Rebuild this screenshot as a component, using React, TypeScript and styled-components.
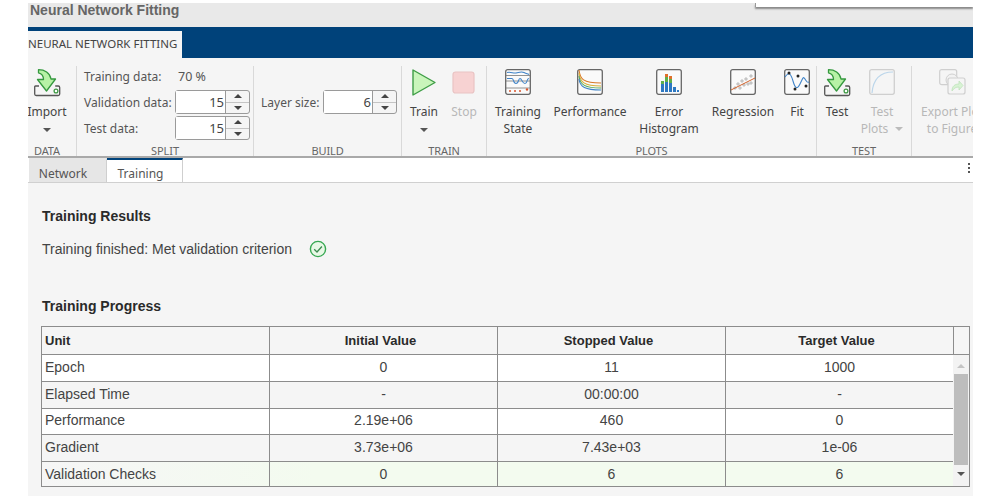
import React from "react";
import styled, { createGlobalStyle } from "styled-components";

const Global = createGlobalStyle`
  html, body { margin: 0; padding: 0; background: #fff; }
  body { font-family: "Liberation Sans", Arial, sans-serif; }
`;

const RIBBON_FONT = `"Noto Sans", "Open Sans", sans-serif`;

const Page = styled.div`
  position: relative;
  width: 945px;
  height: 493px;
  margin: 3px 0 0 28px;
  overflow: hidden;
  display: flex;
  flex-direction: column;
  background: #f5f5f5;
`;
const TitleBar = styled.div`
  height: 24px;
  flex: none;
  background: #e9e9e9;
  color: #666;
  font-size: 14px;
  font-weight: bold;
  line-height: 15px;
  padding-left: 2px;
`;
const Popover = styled.div`
  position: absolute;
  top: 0;
  left: 727px;
  right: 0;
  height: 4px;
  background: #fff;
  border-left: 1px solid #999;
  box-shadow: 0 2px 2px #888;
`;
const BlueBar = styled.div`
  height: 31px;
  flex: none;
  background: #00427a;
  display: flex;
  align-items: flex-end;
`;
const RibbonTab = styled.div`
  width: 154px;
  height: 27px;
  background: #f5f5f5;
  color: #444;
  font: 11.5px/26px ${RIBBON_FONT};
  white-space: nowrap;
`;
const Ribbon = styled.div`
  flex: none;
  display: flex;
  background: #f5f5f5;
  border-bottom: 2px solid #a9a9a9;
  box-sizing: border-box;
  height: 100px;
  font-family: ${RIBBON_FONT};
  color: #444;
  overflow: hidden;
`;
const Group = styled.div<{ $w: number; $ml?: number; $last?: boolean }>`
  width: ${(p) => p.$w}px;
  margin-left: ${(p) => p.$ml ?? 0}px;
  flex: none;
  box-sizing: border-box;
  display: flex;
  flex-direction: column;
  margin-top: 8px;
  border-right: ${(p) => (p.$last ? "none" : "1px solid #d9d9d9")};
`;
const GroupBody = styled.div<{ $pl?: number; $gap?: number; $center?: boolean }>`
  flex: 1;
  display: flex;
  gap: ${(p) => p.$gap ?? 0}px;
  padding-left: ${(p) => p.$pl ?? 0}px;
  justify-content: ${(p) => (p.$center ? "center" : "flex-start")};
  min-height: 0;
`;
const GroupLabel = styled.div`
  height: 10px;
  flex: none;
  text-align: center;
  font-size: 11px;
  line-height: 10px;
  color: #666;
  letter-spacing: -0.1px;
  white-space: nowrap;
`;
const Tool = styled.div<{ $w: number; $off?: boolean }>`
  width: ${(p) => p.$w}px;
  flex: none;
  display: flex;
  flex-direction: column;
  align-items: center;
  padding-top: 3px;
  font-size: 12px;
  line-height: 17px;
  text-align: center;
  color: ${(p) => (p.$off ? "#b8b8b8" : "#444")};
  white-space: nowrap;
`;
const ToolLabel = styled.div``;
const IconWrap = styled.div`
  height: 28px;
  flex: none;
  margin-bottom: 6px;
  display: flex;
  justify-content: center;
`;
const Caret = styled.span<{ $inline?: boolean; $off?: boolean }>`
  display: ${(p) => (p.$inline ? "inline-block" : "block")};
  width: 0;
  height: 0;
  margin: ${(p) => (p.$inline ? "0 0 2px 7px" : "8px auto 0")};
  vertical-align: middle;
  border-left: 4px solid transparent;
  border-right: 4px solid transparent;
  border-top: 4px solid ${(p) => (p.$off ? "#bbb" : "#555")};
`;
const SplitGrid = styled.div<{ $col: number }>`
  display: grid;
  grid-template-columns: ${(p) => p.$col}px auto;
  grid-auto-rows: 26px;
  align-items: center;
  font-size: 12px;
  color: #555;
  margin-top: -3px;
  white-space: nowrap;
`;
const Percent = styled.span`
  padding-left: 3px;
  font-size: 12.5px;
`;
const Spin = styled.div<{ $w: number }>`
  width: ${(p) => p.$w}px;
  height: 24px;
  box-sizing: border-box;
  display: flex;
  border: 1px solid #9a9a9a;
  border-radius: 3px;
  background: #f5f5f5;
`;
const SpinInput = styled.div`
  flex: 1;
  background: #fff;
  text-align: right;
  padding-right: 1px;
  font-size: 13px;
  line-height: 22px;
  color: #444;
`;
const SpinArrows = styled.div`
  width: 23px;
  flex: none;
  border-left: 1px solid #9a9a9a;
  display: flex;
  flex-direction: column;
`;
const SpinHalf = styled.div<{ $top?: boolean }>`
  flex: 1;
  display: flex;
  align-items: center;
  justify-content: center;
  border-bottom: ${(p) => (p.$top ? "1px solid #c4c4c4" : "none")};
`;
const Up = styled.span`
  width: 0;
  height: 0;
  border-left: 4.5px solid transparent;
  border-right: 4.5px solid transparent;
  border-bottom: 4px solid #444;
`;
const Down = styled.span`
  width: 0;
  height: 0;
  border-left: 4.5px solid transparent;
  border-right: 4.5px solid transparent;
  border-top: 4px solid #444;
`;
const Tabs = styled.div`
  height: 25px;
  flex: none;
  display: flex;
  align-items: stretch;
  background: #fff;
  border-bottom: 1px solid #d0d0d0;
  box-sizing: border-box;
  font-family: ${RIBBON_FONT};
  font-size: 12px;
  padding-left: 1px;
`;
const Tab = styled.div<{ $active?: boolean }>`
  width: ${(p) => (p.$active ? 76 : 78)}px;
  box-sizing: border-box;
  text-align: center;
  line-height: 27px;
  padding-right: ${(p) => (p.$active ? 8 : 9)}px;
  color: #555;
  background: ${(p) => (p.$active ? "#fff" : "#e6e6e6")};
  border-top: 2px solid ${(p) => (p.$active ? "#00427a" : "#e6e6e6")};
  border-right: 1px solid #cfcfcf;
`;
const TabSpacer = styled.div`
  flex: 1;
`;
const Kebab = styled.div`
  width: 8px;
  flex: none;
  display: flex;
  flex-direction: column;
  align-items: center;
  justify-content: center;
  gap: 2px;
  padding-bottom: 4px;
`;
const KebabDot = styled.span`
  width: 2px;
  height: 2px;
  background: #555;
`;
const Content = styled.div`
  flex: 1;
  padding: 25px 3px 0 13px;
  display: flex;
  flex-direction: column;
  min-height: 0;
`;
const Heading = styled.div`
  font-size: 14px;
  font-weight: bold;
  color: #2a2a2a;
  line-height: 16px;
  margin-left: 1px;
`;
const Status = styled.div`
  display: flex;
  align-items: center;
  gap: 17px;
  margin: 16px 0 0 1px;
  height: 18px;
  font-size: 14px;
  color: #444;
`;
const ProgressHeading = styled(Heading)`
  margin-top: 40px;
`;
const Table = styled.div`
  margin-top: 12px;
  width: 929px;
  box-sizing: border-box;
  border: 1px solid #8c8c8c;
  font-size: 14px;
  color: #444;
`;
const HeadRow = styled.div`
  display: grid;
  grid-template-columns: 228px 228px 228px 228px 1fr;
  height: 27px;
  border-bottom: 1px solid #8c8c8c;
  background: #f5f5f5;
`;
const HeadCell = styled.div<{ $left?: boolean }>`
  border-right: 1px solid #8c8c8c;
  font-size: 13px;
  font-weight: bold;
  color: #2a2a2a;
  line-height: 28px;
  text-align: ${(p) => (p.$left ? "left" : "center")};
  padding: ${(p) => (p.$left ? "0 0 0 3px" : "0 6px 0 0")};
`;
const HeadEnd = styled.div``;
const TableBody = styled.div`
  display: flex;
`;
const Rows = styled.div`
  width: 911px;
  flex: none;
`;
const Row = styled.div<{ $h: number; $tone: "white" | "grey" | "green"; $last?: boolean }>`
  display: grid;
  grid-template-columns: 228px 228px 228px 1fr;
  height: ${(p) => p.$h}px;
  box-sizing: border-box;
  line-height: ${(p) => (p.$last ? p.$h + 1 : p.$h - 3)}px;
  border-bottom: ${(p) => (p.$last ? "none" : "1px solid #8c8c8c")};
  background: ${(p) =>
    p.$tone === "white"
      ? "#fff"
      : p.$tone === "grey"
        ? "#f5f5f5"
        : "linear-gradient(90deg, #f6f6f6 0%, #f3fbef 30%, #f3fbef 100%)"};
`;
const Cell = styled.div<{ $left?: boolean; $last?: boolean }>`
  border-right: ${(p) => (p.$last ? "none" : "1px solid #8c8c8c")};
  text-align: ${(p) => (p.$left ? "left" : "center")};
  padding-left: ${(p) => (p.$left ? 3 : 0)}px;
  white-space: nowrap;
`;
const Scroll = styled.div`
  flex: 1;
  display: flex;
  flex-direction: column;
  align-items: center;
  background: #f3f3f3;
  padding-top: 9px;
  box-sizing: border-box;
`;
const ScrollThumb = styled.div`
  width: 14px;
  height: 91px;
  margin-top: 6px;
  background: #bdbdbd;
`;
const ScrollUp = styled.span`
  width: 0;
  height: 0;
  border-left: 4.5px solid transparent;
  border-right: 4.5px solid transparent;
  border-bottom: 4px solid #c4c4c4;
`;
const ScrollDown = styled.span`
  width: 0;
  height: 0;
  margin-top: 7px;
  border-left: 4.5px solid transparent;
  border-right: 4.5px solid transparent;
  border-top: 4px solid #555;
`;

const LoadIcon = () => (
  <svg width="27" height="28" viewBox="0 0 27 28">
    <path d="M5 17H1.500Q.7 17 .7 18v7q0 1.500 1.500 1.500h22q1.500 0 1.500-1.500v-6.500q0-1.500-1.500-1.500h-3" fill="#f5f5f5" stroke="#555" strokeWidth="1.300" />
    <circle cx="22" cy="22" r="1.900" fill="#fff" stroke="#3f9a45" strokeWidth="1.300" />
    <path d="M4.500 .7c6 0 11.500 3 12.500 9.300h4.500L12.500 22 3.500 10.500h6C9.500 7 7.500 4.500 4.500 3.800z" fill="#b7f2a6" stroke="#35993f" strokeWidth="1.300" strokeLinejoin="round" />
  </svg>
);
const PlayIcon = () => (
  <svg width="24" height="27" viewBox="0 0 24 27">
    <path d="M1 1 23 13.500 1 26z" fill="#c9f5bb" stroke="#3e9d46" strokeWidth="1.400" strokeLinejoin="round" />
  </svg>
);
const StopIcon = () => (
  <svg width="24" height="28" viewBox="0 0 24 28">
    <rect x="1" y="3" width="21" height="21" rx="2.500" fill="#f7d2d2" stroke="#e9c3c3" strokeWidth="1.200" />
  </svg>
);
const Frame: React.FC<{ children: React.ReactNode; off?: boolean }> = ({ children, off }) => (
  <svg width="26" height="26" viewBox="0 0 26 26">
    <rect x=".7" y=".7" width="24.600" height="24.600" rx="2" fill={off ? "#f5f5f5" : "#fafafa"} stroke={off ? "#cfcfcf" : "#666"} strokeWidth="1.300" />
    {children}
  </svg>
);
const TrainingStateIcon = () => (
  <Frame>
    <path d="M1 6.500h24M1 12h24M1 19h24" stroke="#777" strokeWidth=".8" fill="none" />
    <path d="M2 3.500c4-1 6 1 9 .5s5-2 8-.5 3 1 5 2" stroke="#3f83c8" strokeWidth="1.100" fill="none" />
    <path d="M2 9.500h5c2 0 1 5 4 5s2-5 4-5 2 5 5 5 1-5 4-5" stroke="#3f83c8" strokeWidth="1.100" fill="none" />
    <g fill="#d8542c">
      <circle cx="5" cy="22" r="1" /><circle cx="10" cy="22" r="1" /><circle cx="15" cy="22" r="1" /><circle cx="22" cy="20.500" r="1.200" />
    </g>
  </Frame>
);
const PerformanceIcon = () => (
  <Frame>
    <path d="M2 1c1 9 4 13 22 13" stroke="#d97a2a" strokeWidth="1.100" fill="none" />
    <path d="M2 4c1 9 5 13 22 13" stroke="#d9b03a" strokeWidth="1.100" fill="none" />
    <path d="M2 7c1 9 6 12 22 12" stroke="#58a95a" strokeWidth="1.100" fill="none" />
    <path d="M2 10c1 8 6 11 22 11" stroke="#3f83c8" strokeWidth="1.100" fill="none" />
  </Frame>
);
const HistogramIcon = () => (
  <Frame>
    <rect x="5" y="15" width="3" height="8" fill="#2e78c2" />
    <rect x="5" y="12" width="3" height="3" fill="#5fb04a" />
    <rect x="9" y="13" width="3" height="10" fill="#2e78c2" />
    <rect x="9" y="8" width="3" height="5" fill="#5fb04a" />
    <rect x="9" y="5" width="3" height="3" fill="#e0702a" />
    <rect x="13" y="14" width="3" height="9" fill="#2e78c2" />
    <rect x="13" y="10" width="3" height="4" fill="#5fb04a" />
    <rect x="13" y="7" width="3" height="3" fill="#e0702a" />
    <rect x="17" y="18" width="3" height="5" fill="#2e78c2" />
    <rect x="21" y="21" width="2" height="2" fill="#2e78c2" />
  </Frame>
);
const RegressionIcon = () => (
  <Frame>
    <g fill="#d4d4d4" stroke="#a8a8a8" strokeWidth=".5">
      <circle cx="5" cy="19" r="1.300" /><circle cx="8" cy="15" r="1.300" /><circle cx="10" cy="19" r="1.300" />
      <circle cx="12" cy="12" r="1.300" /><circle cx="14" cy="16" r="1.300" /><circle cx="16" cy="10" r="1.300" />
      <circle cx="18" cy="15" r="1.300" /><circle cx="21" cy="7" r="1.300" /><circle cx="21" cy="14" r="1.300" />
    </g>
    <path d="M1 21 25 9" stroke="#d2622a" strokeWidth="1" />
  </Frame>
);
const FitIcon = () => (
  <Frame>
    <path d="M1 8c4-6 6-3 8 4s4 9 7 3 3-8 5-5 2 4 4 3" stroke="#3f83c8" strokeWidth="1.100" fill="none" />
    <g fill="#222">
      <circle cx="5" cy="4" r="1.500" /><circle cx="14" cy="7" r="1.500" /><circle cx="11" cy="20" r="1.500" /><circle cx="22" cy="17" r="1.500" />
    </g>
  </Frame>
);
const TestPlotsIcon = () => (
  <Frame off>
    <path d="M3 24C4 12 10 3 24 3" stroke="#bcd6ea" strokeWidth="1.200" fill="none" />
  </Frame>
);
const ExportIcon = () => (
  <svg width="27" height="26" viewBox="0 0 27 26">
    <rect x=".7" y=".7" width="17" height="15" rx="2" fill="none" stroke="#cfcfcf" strokeWidth="1.200" />
    <circle cx="13" cy="11" r="6" fill="#f2f2f2" stroke="#d0d0d0" />
    <rect x="9" y="9" width="17" height="16" rx="2" fill="#f5f5f5" stroke="#cfcfcf" strokeWidth="1.200" />
    <path d="M13 22c0-5 3-7 7-7v-3l4 4.500-4 4.500v-3c-3 0-5 1-7 4z" fill="#d8f3d4" stroke="#bfe2bb" strokeWidth=".8" />
  </svg>
);
const CheckIcon = () => (
  <svg width="18" height="18" viewBox="0 0 18 18">
    <circle cx="9" cy="9" r="7.600" fill="#e8f8e6" stroke="#37a852" strokeWidth="1.400" />
    <path d="M5.200 9.300 8 12l4.900-5.500" fill="none" stroke="#3c8a50" strokeWidth="1.300" />
  </svg>
);

const Spinner: React.FC<{ value: number; w: number }> = ({ value, w }) => (
  <Spin $w={w}>
    <SpinInput>{value}</SpinInput>
    <SpinArrows>
      <SpinHalf $top><Up /></SpinHalf>
      <SpinHalf><Down /></SpinHalf>
    </SpinArrows>
  </Spin>
);

type Tone = "white" | "grey" | "green";
const rows: { h: number; tone: Tone; c: string[] }[] = [
  { h: 27, tone: "white", c: ["Epoch", "0", "11", "1000"] },
  { h: 27, tone: "grey", c: ["Elapsed Time", "-", "00:00:00", "-"] },
  { h: 26, tone: "white", c: ["Performance", "2.19e+06", "460", "0"] },
  { h: 27, tone: "grey", c: ["Gradient", "3.73e+06", "7.43e+03", "1e-06"] },
  { h: 24, tone: "green", c: ["Validation Checks", "0", "6", "6"] },
];

export default function App() {
  return (
    <>
      <Global />
      <Page>
        <TitleBar>Neural Network Fitting</TitleBar>
        <Popover />
        <BlueBar>
          <RibbonTab>NEURAL NETWORK FITTING</RibbonTab>
        </BlueBar>
        <Ribbon>
          <Group $w={59} $ml={-10}>
            <GroupBody $center>
              <Tool $w={45}>
                <IconWrap><LoadIcon /></IconWrap>
                <ToolLabel>Import</ToolLabel>
                <Caret />
              </Tool>
            </GroupBody>
            <GroupLabel>DATA</GroupLabel>
          </Group>
          <Group $w={177}>
            <GroupBody $pl={7}>
              <SplitGrid $col={91}>
                <span>Training data:</span>
                <Percent>70 %</Percent>
                <span>Validation data:</span>
                <Spinner value={15} w={75} />
                <span>Test data:</span>
                <Spinner value={15} w={75} />
              </SplitGrid>
            </GroupBody>
            <GroupLabel>SPLIT</GroupLabel>
          </Group>
          <Group $w={148}>
            <GroupBody $pl={7}>
              <SplitGrid $col={62}>
                <span />
                <span />
                <span>Layer size:</span>
                <Spinner value={6} w={74} />
              </SplitGrid>
            </GroupBody>
            <GroupLabel>BUILD</GroupLabel>
          </Group>
          <Group $w={85}>
            <GroupBody $pl={7} $gap={10}>
              <Tool $w={30}>
                <IconWrap><PlayIcon /></IconWrap>
                <ToolLabel>Train</ToolLabel>
                <Caret />
              </Tool>
              <Tool $w={30} $off>
                <IconWrap><StopIcon /></IconWrap>
                <ToolLabel>Stop</ToolLabel>
              </Tool>
            </GroupBody>
            <GroupLabel>TRAIN</GroupLabel>
          </Group>
          <Group $w={330}>
            <GroupBody $pl={8} $gap={12}>
              <Tool $w={46}>
                <IconWrap><TrainingStateIcon /></IconWrap>
                <ToolLabel>Training<br />State</ToolLabel>
              </Tool>
              <Tool $w={74}>
                <IconWrap><PerformanceIcon /></IconWrap>
                <ToolLabel>Performance</ToolLabel>
              </Tool>
              <Tool $w={60}>
                <IconWrap><HistogramIcon /></IconWrap>
                <ToolLabel>Error<br />Histogram</ToolLabel>
              </Tool>
              <Tool $w={64}>
                <IconWrap><RegressionIcon /></IconWrap>
                <ToolLabel>Regression</ToolLabel>
              </Tool>
              <Tool $w={20}>
                <IconWrap><FitIcon /></IconWrap>
                <ToolLabel>Fit</ToolLabel>
              </Tool>
            </GroupBody>
            <GroupLabel>PLOTS</GroupLabel>
          </Group>
          <Group $w={95}>
            <GroupBody $pl={7} $gap={12}>
              <Tool $w={26}>
                <IconWrap><LoadIcon /></IconWrap>
                <ToolLabel>Test</ToolLabel>
              </Tool>
              <Tool $w={40} $off>
                <IconWrap><TestPlotsIcon /></IconWrap>
                <ToolLabel>Test<br />Plots<Caret $inline $off /></ToolLabel>
              </Tool>
            </GroupBody>
            <GroupLabel>TEST</GroupLabel>
          </Group>
          <Group $w={80} $last>
            <GroupBody $pl={4}>
              <Tool $w={72} $off>
                <IconWrap><ExportIcon /></IconWrap>
                <ToolLabel>Export Plot<br />to Figure</ToolLabel>
              </Tool>
            </GroupBody>
          </Group>
        </Ribbon>
        <Tabs>
          <Tab>Network</Tab>
          <Tab $active>Training</Tab>
          <TabSpacer />
          <Kebab>
            <KebabDot />
            <KebabDot />
            <KebabDot />
          </Kebab>
        </Tabs>
        <Content>
          <Heading>Training Results</Heading>
          <Status>
            Training finished: Met validation criterion
            <CheckIcon />
          </Status>
          <ProgressHeading>Training Progress</ProgressHeading>
          <Table>
            <HeadRow>
              <HeadCell $left>Unit</HeadCell>
              <HeadCell>Initial Value</HeadCell>
              <HeadCell>Stopped Value</HeadCell>
              <HeadCell>Target Value</HeadCell>
              <HeadEnd />
            </HeadRow>
            <TableBody>
              <Rows>
                {rows.map((r, i) => (
                  <Row key={r.c[0]} $h={r.h} $tone={r.tone} $last={i === rows.length - 1}>
                    {r.c.map((t, j) => (
                      <Cell key={j} $left={j === 0} $last={j === 3}>{t}</Cell>
                    ))}
                  </Row>
                ))}
              </Rows>
              <Scroll>
                <ScrollUp />
                <ScrollThumb />
                <ScrollDown />
              </Scroll>
            </TableBody>
          </Table>
        </Content>
      </Page>
    </>
  );
}
